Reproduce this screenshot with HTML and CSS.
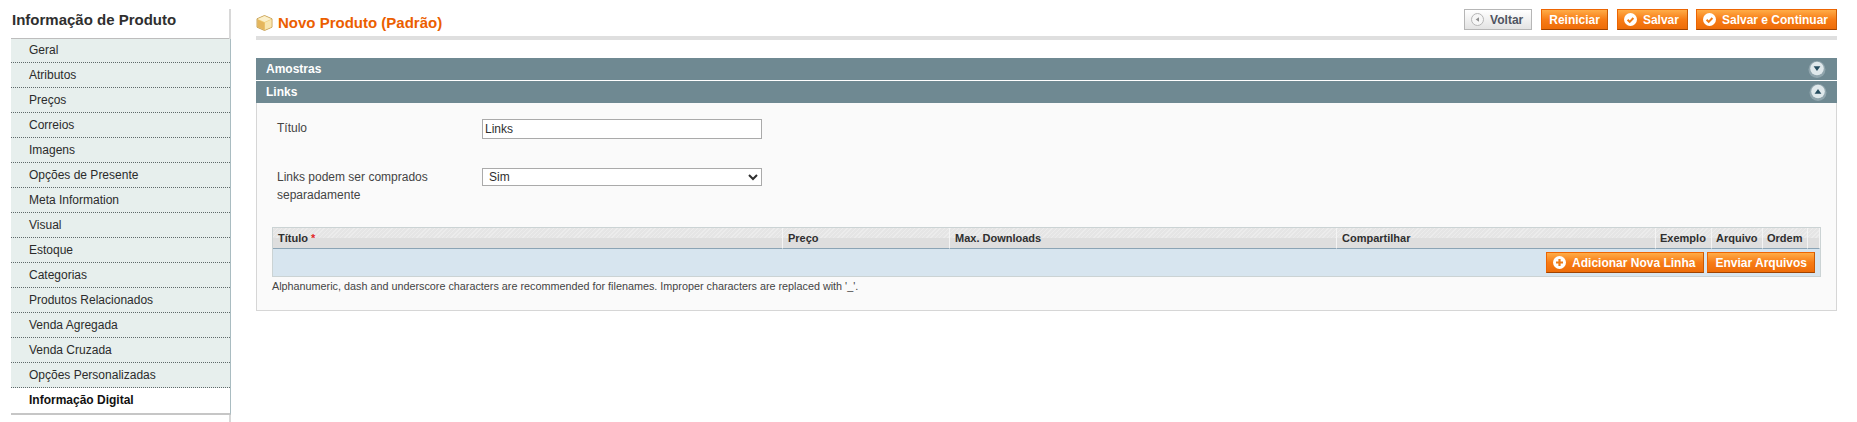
FILE: index.html
```html
<!DOCTYPE html>
<html lang="pt">
<head>
    <meta charset="UTF-8">
    <title>Novo Produto</title>
    <link rel="stylesheet" href="styles.css">
</head>
<body>
<div class="page">
    <aside class="side">
        <h3 class="side-title">Informação de Produto</h3>
        <ul class="tabs">
            <li>Geral</li>
            <li>Atributos</li>
            <li>Preços</li>
            <li>Correios</li>
            <li>Imagens</li>
            <li>Opções de Presente</li>
            <li>Meta Information</li>
            <li>Visual</li>
            <li>Estoque</li>
            <li>Categorias</li>
            <li>Produtos Relacionados</li>
            <li>Venda Agregada</li>
            <li>Venda Cruzada</li>
            <li>Opções Personalizadas</li>
            <li class="active">Informação Digital</li>
        </ul>
    </aside>

    <main class="main">
        <div class="head">
            <h3 class="head-title">
                <svg class="box" width="17" height="16" viewBox="0 0 17 16">
                    <path d="M8.5.5l7.5 3.3v8.4l-7.5 3.3L1 12.200V3.800z" fill="#f0cd78" stroke="#c9a45c"/>
                    <path d="M8.500 1l6.800 3-6.800 3-6.800-3z" fill="#fbf0cc"/>
                    <path d="M9 7.600l6.500-3v7.300L9 14.800z" fill="#f8e6b0"/>
                    <path d="M2 4.800l6.500 2.900v7L2 11.900z" fill="#e5b65c"/>
                </svg>
                Novo Produto (Padrão)
            </h3>
            <div class="head-btns">
                <button class="btn btn-ico back">
                    <svg width="13" height="13" viewBox="0 0 13 13"><circle cx="6.500" cy="6.500" r="6" fill="#f6f6f6" stroke="#b5b5b5"/><path d="M8 4.200v4.600L4.700 6.500z" fill="#8f8f8f"/></svg>
                    Voltar
                </button>
                <button class="btn">Reiniciar</button>
                <button class="btn btn-ico">
                    <svg width="13" height="13" viewBox="0 0 13 13"><circle cx="6.500" cy="6.500" r="6.500" fill="#fff"/><path d="M3.600 6.800l2.100 2.100L9.400 5" fill="none" stroke="#ee7a16" stroke-width="2"/></svg>
                    Salvar
                </button>
                <button class="btn btn-ico last">
                    <svg width="13" height="13" viewBox="0 0 13 13"><circle cx="6.500" cy="6.500" r="6.500" fill="#fff"/><path d="M3.600 6.800l2.100 2.100L9.400 5" fill="none" stroke="#ee7a16" stroke-width="2"/></svg>
                    Salvar e Continuar
                </button>
            </div>
        </div>

        <div class="bar bar-first">
            Amostras
            <svg width="18" height="18" viewBox="0 0 18 18"><circle cx="9" cy="9.500" r="8.500" fill="#90a5ad"/><circle cx="9" cy="8.500" r="6.800" fill="#dfe8eb"/><path d="M5.600 6.300h6.800L9 11z" fill="#264d5f"/></svg>
        </div>
        <div class="bar">
            Links
            <svg width="18" height="18" viewBox="0 0 18 18"><circle cx="9" cy="9.500" r="8.500" fill="#90a5ad"/><circle cx="9" cy="8.500" r="6.800" fill="#dfe8eb"/><path d="M5.600 10.700h6.800L9 6z" fill="#264d5f"/></svg>
        </div>

        <div class="panel">
            <div class="field field-title">
                <label class="lbl">Título</label>
                <input class="inp" type="text" value="Links">
            </div>
            <div class="field field-sep">
                <label class="lbl">Links podem ser comprados separadamente</label>
                <select class="inp sel"><option>Sim</option></select>
            </div>

            <table class="links">
                <colgroup>
                    <col class="c-title"><col class="c-price"><col class="c-max"><col class="c-share">
                    <col class="c-ex"><col class="c-file"><col class="c-ord"><col class="c-act">
                </colgroup>
                <thead>
                    <tr>
                        <th>Título <span class="req">*</span></th>
                        <th>Preço</th>
                        <th>Max. Downloads</th>
                        <th>Compartilhar</th>
                        <th>Exemplo</th>
                        <th>Arquivo</th>
                        <th>Ordem</th>
                        <th></th>
                    </tr>
                </thead>
                <tfoot>
                    <tr>
                        <td colspan="8">
                            <div class="foot-btns">
                                <button class="btn btn-ico">
                                    <svg width="13" height="13" viewBox="0 0 13 13"><circle cx="6.500" cy="6.500" r="6.500" fill="#fff"/><path d="M6.500 3v7M3 6.500h7" stroke="#ee7a16" stroke-width="2.200"/></svg>
                                    Adicionar Nova Linha
                                </button>
                                <button class="btn">Enviar Arquivos</button>
                            </div>
                        </td>
                    </tr>
                </tfoot>
            </table>
            <p class="note">Alphanumeric, dash and underscore characters are recommended for filenames. Improper characters are replaced with '_'.</p>
        </div>
    </main>
</div>
</body>
</html>
```

FILE: styles.css
```css
* {box-sizing: border-box;}
html, body {margin: 0; height: 100%;}
body {
    background: #fff;
    color: #2f2f2f;
    font: 12px/18px "Liberation Sans", Arial, sans-serif;
}

.page {
    display: flex;
    align-items: flex-start;
    padding: 9px 20px 0 11px;
    gap: 25px;
}

/* left column */
.side {
    flex: none;
    width: 220px;
    min-height: 413px;
    border-right: 2px solid #d8d8d8;
}
.side-title {
    margin: 0;
    height: 30px;
    padding-left: 1px;
    font-size: 15px;
    line-height: 22px;
    color: #2f2f2f;
    border-bottom: 1px solid #bdbdbd;
}
.tabs {
    list-style: none;
    margin: 0;
    padding: 0;
    margin-right: -2px;
    border-right: 1px solid #a9bcc1;
    border-bottom: 2px solid #c6c6c6;
}
.tabs li {
    height: 25px;
    padding-left: 18px;
    line-height: 24px;
    background: #e7efed;
    color: #2b2b2b;
    border-bottom: 1px dotted #5f6a6a;
}
.tabs li:first-child {height: 24px; line-height: 23px;}
.tabs li.active {
    background: #fff;
    font-weight: 700;
    color: #111;
    border-bottom: 0;
}

/* right column */
.main {flex: 1; min-width: 0;}
.head {
    display: flex;
    justify-content: space-between;
    height: 31px;
    border-bottom: 4px solid #dfdfdf;
    margin-bottom: 18px;
}
.head-title {
    display: flex;
    align-items: center;
    gap: 5px;
    margin: 0;
    height: 27px;
    font-size: 15px;
    color: #eb5e00;
}
.head-btns {display: flex; gap: 9px; height: 21px;}

.btn {
    display: inline-flex;
    align-items: center;
    gap: 6px;
    height: 21px;
    padding: 0 7px;
    border: 1px solid #ed6502;
    border-right-color: #c85a05;
    border-bottom-color: #a04300;
    background: linear-gradient(#ffac47, #f77c16 50%, #ee6c08);
    color: #fff;
    font: 700 12px/18px "Liberation Sans", Arial, sans-serif;
}
.btn-ico {padding: 0 8px 0 6px;}
.btn.last {margin-left: -1px;}
.btn.back {
    border-color: #b6b6b6;
    background: linear-gradient(#fff, #e3e3e3);
    color: #4f5460;
}

.bar {
    display: flex;
    align-items: center;
    justify-content: space-between;
    height: 22px;
    padding: 0 10px;
    background: #6f8992;
    color: #fff;
    font-weight: 700;
}
.bar-first {margin-bottom: 1px;}
.bar-first svg {margin-right: 1px;}

.panel {
    height: 208px;
    padding: 16px 15px 0;
    background: #fafafa;
    border: 1px solid #d6d6d6;
    border-top: 0;
}
.field {display: flex; align-items: flex-start;}
.field-title {height: 49px;}
.field-sep {height: 59px;}
.lbl {
    flex: none;
    width: 210px;
    padding-left: 5px;
    color: #444;
}
.inp {
    width: 280px;
    height: 20px;
    padding: 0 2px;
    border: 1px solid #aaa;
    background: #fff;
    color: #2f2f2f;
    font: 12px "Liberation Sans", Arial, sans-serif;
}
.sel {height: 18px;}

.links {
    width: 1549px;
    table-layout: fixed;
    border-collapse: separate;
    border-spacing: 0;
    border: 1px solid #cbd3d4;
}
.c-title {width: 510px;}
.c-price {width: 167px;}
.c-max {width: 387px;}
.c-share {width: 319px;}
.c-ex {width: 56px;}
.c-file {width: 51px;}
.c-ord {width: 45px;}
.links th {
    height: 21px;
    padding: 0 4px 0 5px;
    text-align: left;
    font-size: 11px;
    line-height: 18px;
    color: #2f2f2f;
    white-space: nowrap;
    border-right: 1px solid #f4f4f4;
    border-bottom: 1px solid #8ba4b5;
    background:
        repeating-linear-gradient(135deg, #ececec 0 1px, #e5e5e5 1px 3px) top / 100% 10px no-repeat,
        #dedede;
}
.links th:nth-child(n+5) {padding-left: 4px;}
.req {color: #e22626;}
.links td {
    height: 27px;
    padding: 3px 5px 0;
    vertical-align: top;
    background: #d7e5ef;
}
.foot-btns {display: flex; justify-content: flex-end; gap: 3px;}
.note {
    margin: 0;
    font-size: 10.8px;
    line-height: 18px;
    color: #444;
}
```
